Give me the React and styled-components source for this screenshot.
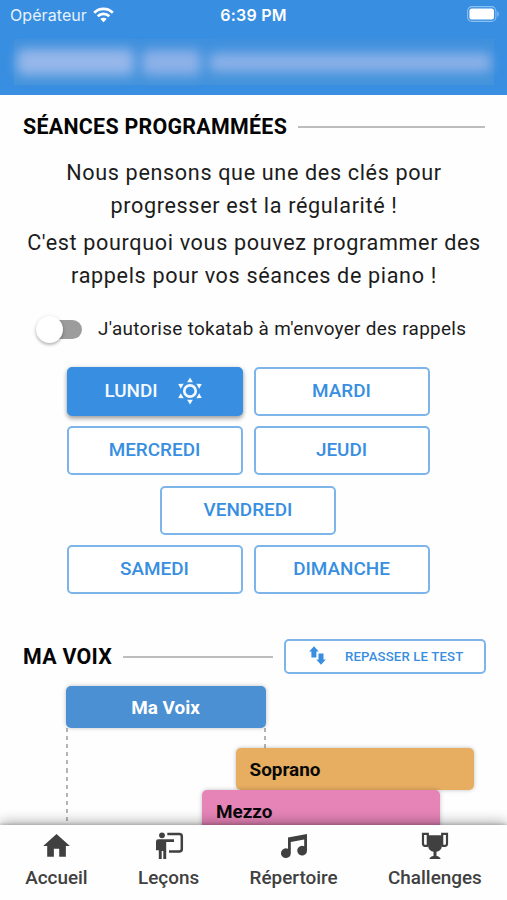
import React from 'react';
import styled, { createGlobalStyle } from 'styled-components';

const GlobalStyle = createGlobalStyle`
  * {
    box-sizing: border-box;
  }

  body {
    margin: 0;
    background: #fefefe;
    font-family: Roboto, sans-serif;
    overflow: hidden;
  }

  svg {
    display: block;
  }
`;

const Screen = styled.div`
  display: flex;
  flex-direction: column;
  width: 507px;
  height: 900px;
  overflow: hidden;
`;

const Header = styled.header`
  flex: none;
  height: 95px;
  background: #388ee0;
  color: #fff;
`;

const StatusBar = styled.div`
  display: grid;
  grid-template-columns: 1fr auto 1fr;
  align-items: center;
  height: 29px;
  padding: 1px 8px 0 10px;
  font-family: Inter, sans-serif;
`;

const Carrier = styled.div`
  display: flex;
  align-items: center;
  gap: 6px;
  font-size: 16px;
  letter-spacing: 0.08px;
  color: #e6f2fd;
`;

const Clock = styled.div`
  font-size: 16px;
  font-weight: 600;
  letter-spacing: 0.2px;
  transform: translateX(-1px);
`;

const Battery = styled.div`
  justify-self: end;
  padding-bottom: 2px;
`;

const Account = styled.div`
  display: flex;
  align-items: center;
  gap: 8px;
  height: 66px;
  padding: 0 16px 0 17px;
  background: linear-gradient(#3f90de, #4494dc) center / 480px 46px no-repeat;
`;

const HiddenText = styled.div`
  flex: ${props => props.$grow};
  height: ${props => props.$height}px;
  border-radius: 6px;
  background: ${props => props.$color};
  filter: blur(6px);
`;

const Content = styled.main`
  flex: 1;
  min-height: 0;
  padding: 0 22px 0 23px;
  overflow: hidden;
`;

const SectionHeader = styled.div`
  display: flex;
  align-items: center;
  gap: 11px;
  height: 35px;
  margin-top: ${props => props.$top}px;
`;

const SectionTitle = styled.h2`
  margin: 0;
  color: #050505;
  font-size: 21.4px;
  font-weight: 700;
  line-height: 28px;
  letter-spacing: 0.28px;
  text-transform: uppercase;
  white-space: nowrap;
`;

const Rule = styled.div`
  flex: 1;
  height: 2px;
  background: #bdbdbd;
`;

const Intro = styled.div`
  margin: 13px -10px 0;
`;

const Paragraph = styled.p`
  margin: 0 0 5px;
  color: #1c1c1c;
  font-size: 21.6px;
  line-height: 32.5px;
  letter-spacing: 0.65px;
  text-align: center;
`;

const SwitchRow = styled.label`
  display: flex;
  align-items: center;
  gap: 16px;
  height: 44px;
  margin: 14px 0 17px 13px;
  color: #1c1c1c;
  font-size: 18.9px;
  letter-spacing: 0.32px;
  white-space: nowrap;
`;

const Track = styled.span`
  display: flex;
  align-items: center;
  width: 46px;
  height: 19px;
  margin-top: 2px;
  background: linear-gradient(#9c9c9c, #9c9c9c) right / 36px 19px no-repeat;
  border-radius: 10px;
`;

const Thumb = styled.span`
  width: 27px;
  height: 27px;
  border-radius: 50%;
  background: #fff;
  box-shadow: 0 2px 3px rgba(0, 0, 0, 0.2), 0 1px 4px rgba(0, 0, 0, 0.14);
`;

const Days = styled.div`
  display: flex;
  flex-wrap: wrap;
  justify-content: center;
  gap: 10.4px 11px;
  width: 380px;
  margin: 0 auto 0 35px;
`;

const DayButton = styled.button`
  display: flex;
  align-items: center;
  justify-content: center;
  gap: 19px;
  width: 176px;
  height: 49px;
  padding: 0 0 2px;
  border: 2px solid ${props => (props.$selected ? '#388ee0' : '#7db5ea')};
  border-radius: 5px;
  background: ${props => (props.$selected ? '#388ee0' : '#fff')};
  box-shadow: ${props => (props.$selected ? '0 3px 4px rgba(0, 0, 0, 0.25), 0 1px 5px rgba(0, 0, 0, 0.2)' : 'none')};
  color: ${props => (props.$selected ? '#f4f9ff' : '#388ee0')};
  font-family: inherit;
  font-size: 18.9px;
  font-weight: 500;
  text-transform: uppercase;

  svg {
    margin-right: 2px;
  }

  &:nth-child(5) {
    margin: 0 80px;
  }
`;

const TestButton = styled.button`
  display: flex;
  align-items: center;
  gap: 19px;
  flex: none;
  width: 202px;
  height: 35px;
  margin-right: -1px;
  padding: 0 0 0 23px;
  border: 2px solid #7db5ea;
  border-radius: 5px;
  background: #fff;
  color: #388ee0;
  font-family: inherit;
  font-size: 13.2px;
  font-weight: 500;
  letter-spacing: 0.15px;
  text-transform: uppercase;
  white-space: nowrap;

  svg {
    margin-bottom: 2px;
  }
`;

const Ranges = styled.div`
  position: relative;
  margin-top: 12px;
  height: 180px;
`;

const RangeBar = styled.div`
  position: relative;
  display: flex;
  align-items: center;
  justify-content: ${props => (props.$main ? 'center' : 'flex-start')};
  width: ${props => props.$width}px;
  height: 42px;
  margin-left: ${props => props.$start}px;
  margin-bottom: ${props => (props.$main ? 20 : 0)}px;
  padding: 0 ${props => (props.$main ? 0 : 14)}px;
  border-radius: 5px;
  background: ${props => props.$color};
  box-shadow: 0 0 4px rgba(0, 0, 0, 0.25);
  color: ${props => (props.$main ? '#fff' : '#090909')};
  font-size: 18.9px;
  font-weight: 700;
`;

// dashed limits of the user's own range, drawn behind the other voices
const Limit = styled.div`
  position: absolute;
  top: 42px;
  left: ${props => props.$left}px;
  width: 1.5px;
  height: 130px;
  background: repeating-linear-gradient(#b4b4b4 0 4px, transparent 4px 8.1px);
`;

const BottomNav = styled.nav`
  position: relative;
  flex: none;
  display: flex;
  justify-content: space-around;
  height: 75.5px;
  background: #fefefe;
  box-shadow: 0 -3px 12px rgba(0, 0, 0, 0.3), 0 -1px 3px rgba(0, 0, 0, 0.18);
`;

const NavItem = styled.a`
  display: flex;
  flex-direction: column;
  align-items: center;
  gap: 3px;
  padding-top: 5px;
  color: #404040;
  font-size: 18.9px;
  font-weight: 500;
  line-height: 26px;
`;

const WifiIcon = () => (
  <svg width="21" height="16" viewBox="0 0 21 16" fill="none" stroke="#fff" strokeWidth="2.7">
    <path d="M1.2 5.8a13.2 13.2 0 0 1 18.6 0" />
    <path d="M4.7 9.3a8.3 8.3 0 0 1 11.6 0" />
    <path d="M10.5 15.2 7.3 12a4.6 4.6 0 0 1 6.4 0Z" fill="#fff" stroke="none" />
  </svg>
);

const BatteryIcon = () => (
  <svg width="32" height="16" viewBox="0 0 32 16">
    <rect x="0.6" y="0.6" width="28.3" height="14.8" rx="4.5" fill="none" stroke="#8bc0f2" strokeWidth="1.1" />
    <rect x="2.4" y="2.5" width="24.6" height="11" rx="2.5" fill="#fff" />
    <path d="M30.4 5.2c1.8.7 1.8 4.9 0 5.6Z" fill="#8bc0f2" />
  </svg>
);

const SunIcon = () => (
  <svg width="26" height="28" viewBox="0 0 26 28" fill="#f4f9ff">
    <circle cx="13" cy="14" r="5.7" fill="none" stroke="#f4f9ff" strokeWidth="2.7" />
    <path d="M13 .6l2.9 4.6h-5.8ZM13 27.4l2.9-4.6h-5.8ZM1.2 7l5.5-.2-2.9 4.9ZM24.8 7l-5.5-.2 2.9 4.9ZM1.2 21l5.5.2-2.9-4.9ZM24.8 21l-5.5.2 2.9-4.9Z" />
  </svg>
);

const SwapIcon = () => (
  <svg width="17" height="19" viewBox="0 0 17 19" fill="#388ee0">
    <path d="M5 .3 9.7 5.6H7.4v5.8H2.4V5.6H.2Z" />
    <path d="M12 18.7 7.3 13.4h2.2V7.6h5v5.8h2.3Z" />
  </svg>
);

const HomeIcon = () => (
  <svg width="32" height="32" viewBox="-0.4 0 24 24" fill="#404040">
    <path d="M10 20v-6h4v6h5v-8h3L12 3 2 12h3v8z" />
  </svg>
);

const TeacherIcon = () => (
  <svg width="32" height="32" viewBox="0 0 32 32" fill="#404040">
    <circle cx="9" cy="5.3" r="2.9" />
    <path d="M5.2 9.3H21v2.8h-7.8V29h-2.9v-8H8.7v8H5.8v-8.8H3v-8.7a2.2 2.2 0 0 1 2.2-2.2Z" />
    <path d="M14.3 4h12a2.5 2.5 0 0 1 2.5 2.5v12.6a2.5 2.5 0 0 1-2.5 2.5H16" fill="none" stroke="#404040" strokeWidth="2.5" />
  </svg>
);

const MusicIcon = () => (
  <svg width="32" height="32" viewBox="0 0 32 32" fill="#404040">
    <path d="M10 7.5 29 4v16.5a4.9 4.9 0 1 1-2.8-4.3V9.6L12.8 12v11.4A4.9 4.9 0 1 1 10 18.7Z" />
  </svg>
);

const TrophyIcon = () => (
  <svg width="32" height="32" viewBox="0 0 32 32" fill="#404040">
    <path d="M9 5.2h14V15a7 7 0 0 1-5.5 6.8v4.1c2.1.3 3.7 1.3 4.2 3.1H10.3c.5-1.8 2.1-2.8 4.2-3.1v-4.1A7 7 0 0 1 9 15Z" />
    <path d="M9 15.8H6a2 2 0 0 1-2-2V3.9h4.8v11M23 15.8h3a2 2 0 0 0 2-2V3.9h-4.8v11" fill="none" stroke="#404040" strokeWidth="2.2" />
  </svg>
);

const days = [
  { name: 'Lundi', selected: true },
  { name: 'Mardi' },
  { name: 'Mercredi' },
  { name: 'Jeudi' },
  { name: 'Vendredi' },
  { name: 'Samedi' },
  { name: 'Dimanche' },
];

const tabs = [
  { label: 'Accueil', Icon: HomeIcon },
  { label: 'Leçons', Icon: TeacherIcon },
  { label: 'Répertoire', Icon: MusicIcon },
  { label: 'Challenges', Icon: TrophyIcon },
];

function App() {
  return (
    <Screen>
      <GlobalStyle />
      <Header>
        <StatusBar>
          <Carrier>
            Opérateur
            <WifiIcon />
          </Carrier>
          <Clock>6:39 PM</Clock>
          <Battery>
            <BatteryIcon />
          </Battery>
        </StatusBar>
        <Account>
          <HiddenText $grow={118} $height={26} $color="#96b7ea" />
          <HiddenText $grow={60} $height={25} $color="#8db1e8" />
          <HiddenText $grow={285} $height={19} $color="#8bb1e8" />
        </Account>
      </Header>

      <Content>
        <SectionHeader $top={14}>
          <SectionTitle>Séances programmées</SectionTitle>
          <Rule />
        </SectionHeader>

        <Intro>
          <Paragraph>
            Nous pensons que une des clés pour
            <br />
            progresser est la régularité !
          </Paragraph>
          <Paragraph>
            C'est pourquoi vous pouvez programmer des
            <br />
            rappels pour vos séances de piano !
          </Paragraph>
        </Intro>

        <SwitchRow>
          <Track>
            <Thumb />
          </Track>
          J'autorise tokatab à m'envoyer des rappels
        </SwitchRow>

        <Days>
          {days.map(day => (
            <DayButton key={day.name} $selected={day.selected}>
              {day.name}
              {day.selected && <SunIcon />}
            </DayButton>
          ))}
        </Days>

        <SectionHeader $top={45}>
          <SectionTitle>Ma voix</SectionTitle>
          <Rule />
          <TestButton>
            <SwapIcon />
            Repasser le test
          </TestButton>
        </SectionHeader>

        <Ranges>
          <Limit $left={43} />
          <Limit $left={241} />
          <RangeBar $main $start={42.5} $width={200} $color="#4a90d2">Ma Voix</RangeBar>
          <RangeBar $start={212.5} $width={238} $color="#e7ad60">Soprano</RangeBar>
          <RangeBar $start={179} $width={238} $color="#e684b8">Mezzo</RangeBar>
        </Ranges>
      </Content>

      <BottomNav>
        {tabs.map(({ label, Icon }) => (
          <NavItem key={label}>
            <Icon />
            {label}
          </NavItem>
        ))}
      </BottomNav>
    </Screen>
  );
}

export default App;
